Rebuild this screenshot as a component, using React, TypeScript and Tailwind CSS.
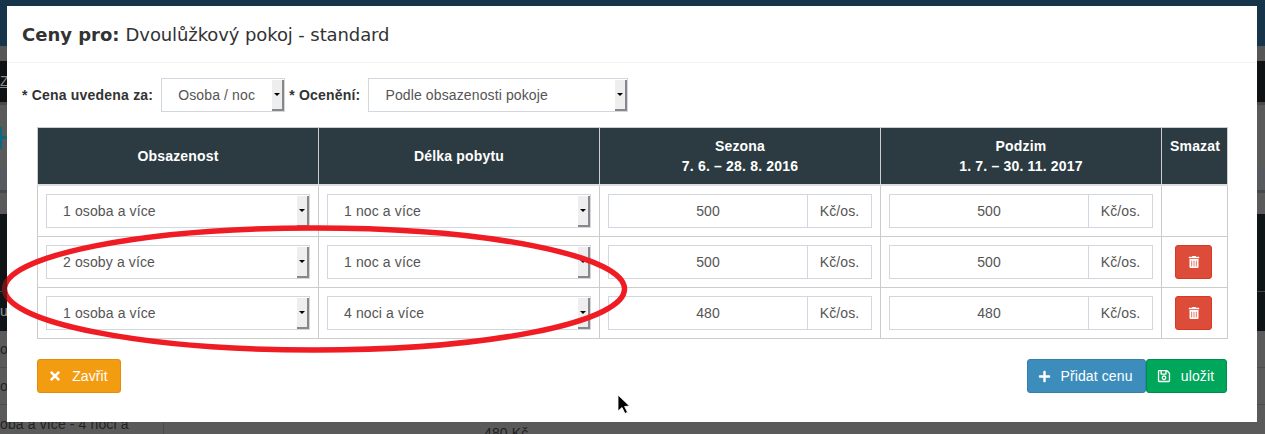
import React from "react";
import { FaTimes, FaPlus, FaRegSave, FaTrashAlt } from "react-icons/fa";

function Sel({ value, className, options }: { value: string; className: string; options?: string[] }) {
  return (
    <div className={"relative h-[34px] " + className}>
      <select
        defaultValue={value}
        className="block h-full w-full appearance-none rounded-none border border-[#d2d6de] bg-white pl-4 pr-4 text-[14px] tracking-[0.12px] text-[#555] outline-none"
      >
        {(options ?? [value]).map((o) => (
          <option key={o}>{o}</option>
        ))}
      </select>
      <span className="pointer-events-none absolute right-[1px] top-[2px] flex h-[31px] w-[12px] items-center justify-center border-r-2 border-b-2 border-[#888] bg-[#eee]">
        <span className="h-0 w-0 border-x-[3px] border-t-[3px] border-x-transparent border-t-black" />
      </span>
    </div>
  );
}

function Price({ value }: { value: string }) {
  return (
    <div className="flex h-[34px] text-[14px] tracking-[0.12px] text-[#555]">
      <input
        defaultValue={value}
        className="h-full w-[200px] min-w-0 rounded-none border border-[#d2d6de] bg-white text-center outline-none"
      />
      <span className="flex h-full flex-1 items-center justify-center border-y border-r border-[#d2d6de] bg-white">Kč/os.</span>
    </div>
  );
}

function Row({ occ, len, a, b, del }: { occ: string; len: string; a: string; b: string; del: boolean }) {
  const td = "border border-[#ccc] p-2 align-top";
  return (
    <tr>
      <td className={td}><Sel value={occ} className="w-full" /></td>
      <td className={td}><Sel value={len} className="w-full" /></td>
      <td className={td}><Price value={a} /></td>
      <td className={td}><Price value={b} /></td>
      <td className={td + " text-center"}>
        {del && (
          <button className="mr-[2px] inline-flex h-[34px] w-[37px] items-center justify-center rounded-[3px] border border-[#d73925] bg-[#dd4b39] text-[12px] text-white">
            <FaTrashAlt />
          </button>
        )}
      </td>
    </tr>
  );
}

export default function App() {
  const th = "border border-[#ccc] border-b-2 border-b-[#ddd] p-2 text-center text-[14px] font-bold leading-5 tracking-[0.18px] text-white";
  return (
    <div className="relative h-[434px] w-[1265px] overflow-hidden bg-[#5a5a5a] font-['Liberation_Sans',sans-serif]">
      {/* dimmed page behind the dialog */}
      <div className="h-[46px] bg-[#16344a]" />
      <div className="h-[15px] bg-[#565656]" />
      <div className="flex h-[41px] items-center bg-[#0e1215] text-[14px] text-[#8a8a8a]"><span className="underline">Z</span></div>
      <div className="h-[3px] bg-[#484848]" />
      <div className="relative h-[63px] bg-[#5a5a5a]">
        <div className="absolute left-0 top-[22px] h-[22px] w-[2px] bg-[#0a6a80]" />
        <div className="absolute left-0 top-[31px] h-[3px] w-[7px] bg-[#0a6a80]" />
      </div>
      <div className="h-[22px] bg-[#565a5e]" />
      <div className="h-[3px] bg-[#484848]" />
      <div className="h-[21px] bg-[#5a5a5a]" />
      <div className="h-[78px] border-b border-[#444] bg-[#0f1416]" />
      <div className="flex h-[39px] items-center bg-[#0f1416] text-[14px] text-[#9a9a9a]">u</div>
      <div className="flex h-[37px] items-center border-b border-[#4c4c4c] text-[14px] text-[#222]">o</div>
      <div className="flex h-[37px] items-center border-b border-[#4c4c4c] text-[14px] text-[#222]">o</div>
      <div className="flex h-[29px]">
        <div className="w-[164px] overflow-hidden whitespace-nowrap border-r border-[#4c4c4c] pt-[9px] text-[14px] tracking-[0.12px] text-[#222]">oba a více - 4 noci a</div>
        <div className="pl-[320px] pt-[18px] text-[14px] tracking-[0.12px] text-[#222]">480 Kč</div>
      </div>

      {/* dialog */}
      <div className="absolute left-[7px] top-[6px] flex h-[416px] w-[1250px] flex-col bg-white text-[#333]">
        <div className="flex h-[57px] items-center border-b border-[#f4f4f4] px-[15px] pt-[1px] font-['DejaVu_Sans',sans-serif] text-[18px]">
          <b className="mr-[6px]">Ceny pro:</b>
          <span className="tracking-[-0.1px]">Dvoulůžkový pokoj - standard</span>
        </div>
        <div className="flex flex-col px-[15px] pt-[15px]">
          <div className="flex h-[34px] items-center text-[14px] font-bold tracking-[0.2px]">
            <span>* Cena uvedena za:</span>
            <Sel value="Osoba / noc" className="ml-[8px] w-[124px] font-normal" />
            <span className="ml-[4px]">* Ocenění:</span>
            <Sel value="Podle obsazenosti pokoje" className="ml-[8px] w-[260px] font-normal" />
          </div>
          <div className="mx-[15px] mt-[15px]">
            <table className="w-[1190px] table-fixed border-collapse">
              <colgroup>
                <col className="w-[281px]" />
                <col className="w-[281px]" />
                <col className="w-[281px]" />
                <col className="w-[281px]" />
                <col className="w-[66px]" />
              </colgroup>
              <thead className="bg-[#2c3b41]">
                <tr>
                  <th className={th}>Obsazenost</th>
                  <th className={th}>Délka pobytu</th>
                  <th className={th}>Sezona<br />7. 6. – 28. 8. 2016</th>
                  <th className={th}>Podzim<br />1. 7. – 30. 11. 2017</th>
                  <th className={th + " align-top"}>Smazat</th>
                </tr>
              </thead>
              <tbody>
                <Row occ="1 osoba a více" len="1 noc a více" a="500" b="500" del={false} />
                <Row occ="2 osoby a více" len="1 noc a více" a="500" b="500" del />
                <Row occ="1 osoba a více" len="4 noci a více" a="480" b="480" del />
              </tbody>
            </table>
            <div className="mt-[20px] flex justify-between text-[14px] tracking-[0.12px] text-white">
              <button className="flex h-[34px] w-[84px] items-center justify-center gap-[10px] rounded-[3px] border border-[#e08e0b] bg-[#f39c12] pr-[2px]">
                <FaTimes className="text-[14px]" /> Zavřit
              </button>
              <div className="flex">
                <button className="flex h-[34px] w-[119px] items-center justify-center gap-[9px] rounded-[3px] border border-[#367fa9] bg-[#3c8dbc] pr-[2px]">
                  <FaPlus className="text-[13px]" /> Přidat cenu
                </button>
                <button className="flex h-[34px] w-[81px] items-center justify-center gap-[10px] rounded-[3px] border border-[#008d4c] bg-[#00a65a] pr-[2px]">
                  <FaRegSave className="text-[14px]" /> uložit
                </button>
              </div>
            </div>
          </div>
        </div>
      </div>

      {/* hand-drawn annotation and mouse pointer */}
      <svg className="pointer-events-none absolute left-0 top-0" width="1265" height="434" viewBox="0 0 1265 434">
        <defs>
          <clipPath id="outside"><rect x="0" y="0" width="7" height="434" /></clipPath>
          <clipPath id="inside"><rect x="7" y="0" width="1258" height="434" /></clipPath>
        </defs>
        <ellipse cx="314.5" cy="289" rx="310" ry="61" fill="none" stroke="#6a1518" strokeWidth="5.5" clipPath="url(#outside)" />
        <ellipse cx="314.5" cy="289" rx="310" ry="61" fill="none" stroke="#f01c24" strokeWidth="5.5" clipPath="url(#inside)" />
        <path d="M618 395 L618 411 L622 407.5 L625 413.5 L627.5 412.3 L624.6 406.5 L629.5 406 Z" fill="#000" stroke="#fff" strokeWidth="0.8" />
      </svg>
    </div>
  );
}
